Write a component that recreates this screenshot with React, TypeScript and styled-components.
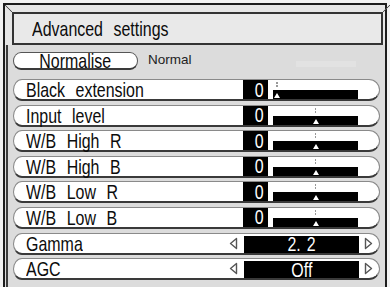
import React from "react";
import styled, { createGlobalStyle } from "styled-components";

const GlobalStyle = createGlobalStyle`
  html, body {
    margin: 0;
    padding: 0;
    background: #f2f2f2;
  }
  body {
    font-family: "Liberation Sans", Arial, sans-serif;
  }
`;

const Screen = styled.div`
  width: 390px;
  height: 287px;
  overflow: hidden;
  padding: 3px 3px 0 3px;
  box-sizing: border-box;
`;

const Frame = styled.div`
  position: relative;
  height: 292px;
  border: 2px solid #1c1c1c;
  border-bottom: none;
  background: #dcdcdc;
  display: flex;
  flex-direction: column;

  /* bevel corners of the title well */
  &::before,
  &::after {
    content: "";
    position: absolute;
    top: 0;
    width: 7px;
    height: 7px;
  }
  &::before {
    left: 0;
    background: linear-gradient(
      to top right,
      transparent calc(50% - 0.8px),
      #555 50%,
      transparent calc(50% + 0.8px)
    );
  }
  &::after {
    right: -5px;
    background: linear-gradient(
      to top left,
      transparent calc(50% - 0.8px),
      #555 50%,
      transparent calc(50% + 0.8px)
    );
  }
`;

const TitleWell = styled.div`
  padding: 7px 2px 0 7px;
  background: #e6e6e6;
`;

const TitleBox = styled.div`
  height: 33px;
  box-sizing: border-box;
  border: 2px solid #333;
  background: #e9e9e9;
  display: flex;
  align-items: center;
  padding-left: 18px;
`;

const Text = styled.span<{ $center?: boolean }>`
  display: inline-block;
  font-size: 21px;
  line-height: 18px;
  color: #0c0c0c;
  white-space: nowrap;
  word-spacing: 8px;
  transform: scaleX(0.76);
  transform-origin: ${(p) => (p.$center ? "center" : "left center")};
`;

const Body = styled.div`
  flex: 1;
  margin-left: 1px;
  border-left: 2px solid #3c3c3c;
  padding: 7px 5px 0 5px;
  background: #dcdcdc;
`;

const NormaliseLine = styled.div`
  display: flex;
  align-items: center;
  height: 18px;
  gap: 10px;
`;

const NormaliseButton = styled.div`
  width: 125px;
  height: 18px;
  box-sizing: border-box;
  border: 1.5px solid #555;
  border-bottom: 2px solid #3a3a3a;
  border-radius: 8px / 9px;
  background: #fff;
  display: flex;
  align-items: center;
  justify-content: center;
`;

const SmallNote = styled.span`
  font-size: 13.5px;
  color: #222;
  margin-top: -3px;
`;

const Ghost = styled.div`
  margin-left: auto;
  margin-right: 24px;
  margin-top: 6px;
  width: 60px;
  height: 6px;
  background: #e2e2e2;
`;

const List = styled.div`
  display: flex;
  flex-direction: column;
  gap: 3.6px;
  margin-top: 9px;
`;

const Row = styled.div`
  height: 22px;
  box-sizing: border-box;
  border: 1.5px solid #8a8a8a;
  border-bottom: 2.5px solid #3a3a3a;
  border-radius: 9px 11px 11px 9px / 11px;
  background: #fff;
  display: flex;
  align-items: stretch;
  padding-left: 12px;
`;

const LabelCell = styled.div`
  flex: 1;
  display: flex;
  align-items: center;
  padding-top: 1px;
`;

const Slider = styled.div`
  width: 115px;
  margin-right: 21px;
  display: flex;
`;

const NumBox = styled.div`
  width: 25px;
  background: #000;
  display: flex;
  align-items: center;
  justify-content: flex-end;
  padding-right: 4px;
  box-sizing: border-box;

  ${Text} {
    color: #fff;
    transform-origin: right center;
  }
`;

const Track = styled.div`
  position: relative;
  flex: 1;
  margin-left: 5px;
`;

const Bar = styled.div`
  position: absolute;
  left: 0;
  right: 0;
  bottom: 0;
  height: 9px;
  background: #000;
`;

const Tick = styled.div<{ $pos: string }>`
  position: absolute;
  top: 2px;
  left: ${(p) => p.$pos};
  width: 1.5px;
  height: 5px;
  margin-left: -0.75px;
  background: repeating-linear-gradient(#999 0 2px, transparent 2px 3px);
`;

const Marker = styled.div<{ $pos: string }>`
  position: absolute;
  bottom: 1px;
  left: ${(p) => p.$pos};
  margin-left: -3px;
  width: 0;
  height: 0;
  border-left: 3px solid transparent;
  border-right: 3px solid transparent;
  border-bottom: 5px solid #fff;
`;

const Selector = styled.div`
  display: flex;
  align-items: center;
  margin-right: 6px;
`;

const ValueBox = styled.div`
  width: 115px;
  align-self: stretch;
  margin: 2px 5px 0 6px;
  background: #000;
  display: flex;
  align-items: center;
  justify-content: center;

  ${Text} {
    color: #fff;
    word-spacing: 2px;
  }
`;

const Arrow = ({ dir }: { dir: "left" | "right" }) => (
  <svg width="9" height="13" viewBox="0 0 9 13">
    <path
      d={dir === "left" ? "M7.5 1.5 L1.5 6.5 L7.5 11.5 Z" : "M1.5 1.5 L7.5 6.5 L1.5 11.5 Z"}
      fill="#fff"
      stroke="#555"
      strokeWidth="1.4"
      strokeLinejoin="round"
    />
  </svg>
);

type Item =
  | { kind: "slider"; label: string; value: number; pos: string }
  | { kind: "select"; label: string; value: string };

const items: Item[] = [
  { kind: "slider", label: "Black extension", value: 0, pos: "4px" },
  { kind: "slider", label: "Input level", value: 0, pos: "50%" },
  { kind: "slider", label: "W/B High R", value: 0, pos: "50%" },
  { kind: "slider", label: "W/B High B", value: 0, pos: "50%" },
  { kind: "slider", label: "W/B Low R", value: 0, pos: "50%" },
  { kind: "slider", label: "W/B Low B", value: 0, pos: "50%" },
  { kind: "select", label: "Gamma", value: "2. 2" },
  { kind: "select", label: "AGC", value: "Off" },
];

export default function App() {
  return (
    <>
      <GlobalStyle />
      <Screen>
        <Frame>
          <TitleWell>
            <TitleBox>
              <Text>Advanced settings</Text>
            </TitleBox>
          </TitleWell>
          <Body>
            <NormaliseLine>
              <NormaliseButton>
                <Text $center>Normalise</Text>
              </NormaliseButton>
              <SmallNote>Normal</SmallNote>
              <Ghost />
            </NormaliseLine>
            <List>
              {items.map((it) => (
                <Row key={it.label}>
                  <LabelCell>
                    <Text>{it.label}</Text>
                  </LabelCell>
                  {it.kind === "slider" ? (
                    <Slider>
                      <NumBox>
                        <Text>{it.value}</Text>
                      </NumBox>
                      <Track>
                        <Tick $pos={it.pos} />
                        <Bar />
                        <Marker $pos={it.pos} />
                      </Track>
                    </Slider>
                  ) : (
                    <Selector>
                      <Arrow dir="left" />
                      <ValueBox>
                        <Text $center>{it.value}</Text>
                      </ValueBox>
                      <Arrow dir="right" />
                    </Selector>
                  )}
                </Row>
              ))}
            </List>
          </Body>
        </Frame>
      </Screen>
    </>
  );
}
